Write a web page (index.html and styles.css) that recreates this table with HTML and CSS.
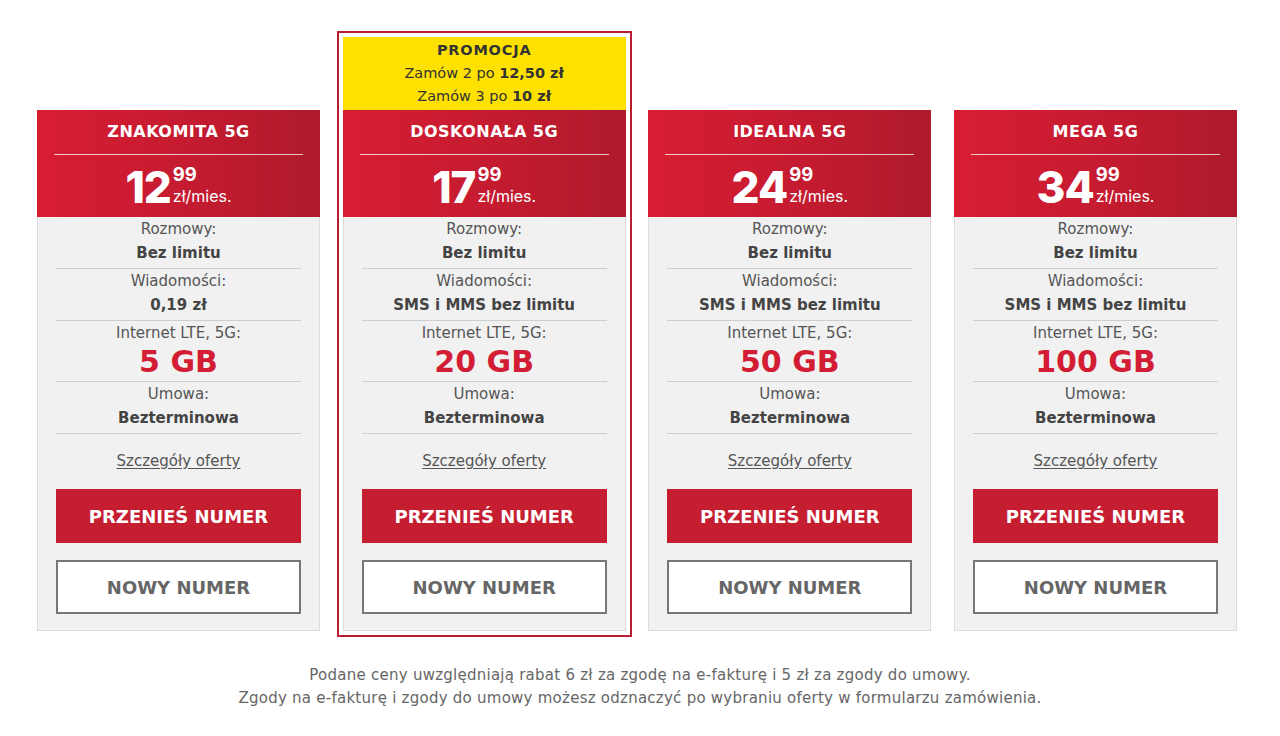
FILE: index.html
```html
<!DOCTYPE html>
<html lang="pl">
<head>
<meta charset="utf-8">
<title>Oferty 5G</title>
<link rel="stylesheet" href="styles.css">
</head>
<body>
<main class="page">
  <section class="plans">
    <div class="plan">
      <div class="card">
        <header class="card-head">
          <h2 class="card-title">ZNAKOMITA 5G</h2>
          <div class="price">
            <span class="price-main">12</span>
            <span class="price-side"><span class="price-cents">99</span><span class="price-unit">zł/mies.</span></span>
          </div>
        </header>
        <div class="card-body">
          <div class="feat"><div class="feat-label">Rozmowy:</div><div class="feat-value">Bez limitu</div></div>
          <div class="feat"><div class="feat-label">Wiadomości:</div><div class="feat-value">0,19 zł</div></div>
          <div class="feat"><div class="feat-label">Internet LTE, 5G:</div><div class="feat-value feat-big">5 GB</div></div>
          <div class="feat"><div class="feat-label">Umowa:</div><div class="feat-value">Bezterminowa</div></div>
          <a class="details" href="#">Szczegóły oferty</a>
          <a class="btn btn-red" href="#">PRZENIEŚ NUMER</a>
          <a class="btn btn-white" href="#">NOWY NUMER</a>
        </div>
      </div>
    </div>

    <div class="plan plan-featured">
      <div class="promo">
        <div class="promo-title">PROMOCJA</div>
        <div>Zamów 2 po <b>12,50 zł</b></div>
        <div>Zamów 3 po <b>10 zł</b></div>
      </div>
      <div class="card">
        <header class="card-head">
          <h2 class="card-title">DOSKONAŁA 5G</h2>
          <div class="price">
            <span class="price-main">17</span>
            <span class="price-side"><span class="price-cents">99</span><span class="price-unit">zł/mies.</span></span>
          </div>
        </header>
        <div class="card-body">
          <div class="feat"><div class="feat-label">Rozmowy:</div><div class="feat-value">Bez limitu</div></div>
          <div class="feat"><div class="feat-label">Wiadomości:</div><div class="feat-value">SMS i MMS bez limitu</div></div>
          <div class="feat"><div class="feat-label">Internet LTE, 5G:</div><div class="feat-value feat-big">20 GB</div></div>
          <div class="feat"><div class="feat-label">Umowa:</div><div class="feat-value">Bezterminowa</div></div>
          <a class="details" href="#">Szczegóły oferty</a>
          <a class="btn btn-red" href="#">PRZENIEŚ NUMER</a>
          <a class="btn btn-white" href="#">NOWY NUMER</a>
        </div>
      </div>
    </div>

    <div class="plan">
      <div class="card">
        <header class="card-head">
          <h2 class="card-title">IDEALNA 5G</h2>
          <div class="price">
            <span class="price-main">24</span>
            <span class="price-side"><span class="price-cents">99</span><span class="price-unit">zł/mies.</span></span>
          </div>
        </header>
        <div class="card-body">
          <div class="feat"><div class="feat-label">Rozmowy:</div><div class="feat-value">Bez limitu</div></div>
          <div class="feat"><div class="feat-label">Wiadomości:</div><div class="feat-value">SMS i MMS bez limitu</div></div>
          <div class="feat"><div class="feat-label">Internet LTE, 5G:</div><div class="feat-value feat-big">50 GB</div></div>
          <div class="feat"><div class="feat-label">Umowa:</div><div class="feat-value">Bezterminowa</div></div>
          <a class="details" href="#">Szczegóły oferty</a>
          <a class="btn btn-red" href="#">PRZENIEŚ NUMER</a>
          <a class="btn btn-white" href="#">NOWY NUMER</a>
        </div>
      </div>
    </div>

    <div class="plan">
      <div class="card">
        <header class="card-head">
          <h2 class="card-title">MEGA 5G</h2>
          <div class="price">
            <span class="price-main">34</span>
            <span class="price-side"><span class="price-cents">99</span><span class="price-unit">zł/mies.</span></span>
          </div>
        </header>
        <div class="card-body">
          <div class="feat"><div class="feat-label">Rozmowy:</div><div class="feat-value">Bez limitu</div></div>
          <div class="feat"><div class="feat-label">Wiadomości:</div><div class="feat-value">SMS i MMS bez limitu</div></div>
          <div class="feat"><div class="feat-label">Internet LTE, 5G:</div><div class="feat-value feat-big">100 GB</div></div>
          <div class="feat"><div class="feat-label">Umowa:</div><div class="feat-value">Bezterminowa</div></div>
          <a class="details" href="#">Szczegóły oferty</a>
          <a class="btn btn-red" href="#">PRZENIEŚ NUMER</a>
          <a class="btn btn-white" href="#">NOWY NUMER</a>
        </div>
      </div>
    </div>
  </section>

  <p class="note">Podane ceny uwzględniają rabat 6 zł za zgodę na e-fakturę i 5 zł za zgody do umowy.<br>Zgody na e-fakturę i zgody do umowy możesz odznaczyć po wybraniu oferty w formularzu zamówienia.</p>
</main>
</body>
</html>
```

FILE: styles.css
```css
* { box-sizing: border-box; }

html, body {
  margin: 0;
  padding: 0;
  background: #ffffff;
}

body {
  font-family: "DejaVu Sans", Inter, sans-serif;
  color: #555555;
  font-size: 15px;
}

.page {
  padding-top: 31px;
}

.plans {
  display: flex;
  align-items: flex-start;
  gap: 22.67px;
  padding-left: 37px;
}

.plan {
  width: 283px;
  flex: none;
  margin-top: 79px;
}

.plan-featured {
  margin: 0 -6px;
  width: 295px;
  border: 2px solid #b81d32;
  padding: 4px;
}

.promo {
  background: #ffe100;
  color: #333333;
  text-align: center;
  font-size: 14.5px;
  line-height: 23px;
  padding: 2px 0;
}

.promo-title {
  font-weight: 700;
  letter-spacing: 0.8px;
}

.promo b { font-weight: 700; }

.card-head {
  background: linear-gradient(90deg, #d81d32 0%, #c41b30 55%, #ae1a2c 100%);
  color: #ffffff;
  height: 107px;
  padding: 11px 17px 0;
}

.card-title {
  margin: 0;
  font-size: 16px;
  font-weight: 700;
  line-height: 22px;
  letter-spacing: 0.5px;
  text-align: center;
  padding-bottom: 11px;
  border-bottom: 1px solid rgba(255, 255, 255, 0.75);
}

.price {
  display: flex;
  justify-content: center;
  align-items: flex-start;
  padding-top: 9px;
  font-family: Inter, "DejaVu Sans", sans-serif;
}

.price-main {
  font-size: 44px;
  font-weight: 800;
  line-height: 46px;
  letter-spacing: -1px;
}

.price-side {
  display: flex;
  flex-direction: column;
  padding-left: 2px;
}

.price-cents {
  font-size: 18.5px;
  font-weight: 700;
  line-height: 18px;
  padding-top: 1px;
}

.price-unit {
  font-size: 16px;
  font-weight: 400;
  line-height: 18px;
  margin-top: 4px;
}

.card-body {
  background: #f1f1f1;
  border: 1px solid #dcdcdc;
  border-top: none;
  padding: 0 18px 16px;
  display: flex;
  flex-direction: column;
  text-align: center;
}

.feat {
  border-bottom: 1px solid #cfcfcf;
  padding-bottom: 3px;
}

.feat-label {
  line-height: 24px;
  color: #555555;
}

.feat-value {
  line-height: 24px;
  font-weight: 700;
  color: #444444;
}

.feat-big {
  font-size: 30px;
  line-height: 33px;
  font-weight: 700;
  color: #d21d34;
}

.details {
  margin-top: 15px;
  line-height: 24px;
  color: #555555;
  text-decoration: underline;
  text-underline-offset: 2px;
}

.btn {
  display: flex;
  align-items: center;
  justify-content: center;
  height: 54px;
  font-size: 18px;
  font-weight: 700;
  text-decoration: none;
}

.btn-red {
  margin-top: 16px;
  background: #c51e31;
  color: #ffffff;
}

.btn-white {
  margin-top: 17px;
  background: #ffffff;
  border: 2px solid #777777;
  color: #666666;
}

.note {
  margin: 27px 0 0;
  text-align: center;
  line-height: 23px;
  color: #666666;
  font-size: 15px;
  letter-spacing: 0.25px;
}
```
